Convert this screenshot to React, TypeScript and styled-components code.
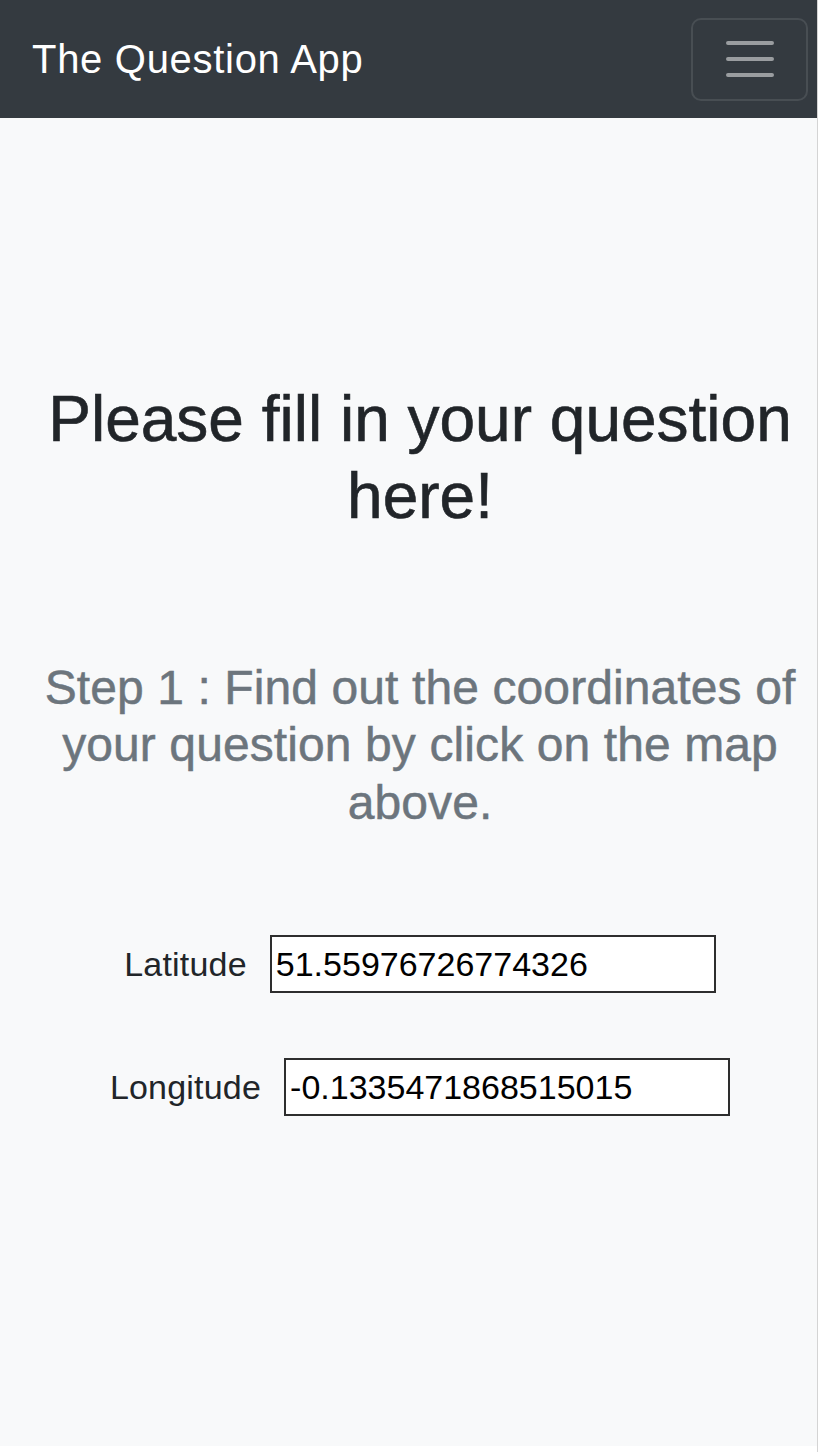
import React from "react";
import styled, { createGlobalStyle } from "styled-components";

const GlobalStyle = createGlobalStyle`
  html, body {
    margin: 0;
    padding: 0;
    background: #ffffff;
  }
  body {
    font-family: "Liberation Sans", Arial, Helvetica, sans-serif;
    color: #212529;
  }
  * { box-sizing: border-box; }
`;

const Page = styled.div`
  width: 818px;
  min-height: 1452px;
  border-right: 1px solid #d4d4d4;
  display: flex;
  flex-direction: column;
`;

const Navbar = styled.nav`
  height: 118px;
  background: #343a40;
  display: flex;
  align-items: center;
  justify-content: space-between;
  padding: 0 9px 0 32px;
`;

const Brand = styled.a`
  font-size: 40px;
  line-height: 46px;
  letter-spacing: 0.7px;
  color: #ffffff;
  text-decoration: none;
  white-space: nowrap;
`;

const Toggler = styled.button`
  width: 117px;
  height: 83px;
  display: flex;
  align-items: center;
  justify-content: center;
  background: transparent;
  border: 2px solid rgba(255, 255, 255, 0.1);
  border-radius: 10px;
  padding: 0;
  cursor: pointer;
`;

const Main = styled.main`
  height: 1328px;
  background: #f8f9fa;
  padding: 263px 7px 0 30px;
  display: flex;
  flex-direction: column;
  align-items: stretch;
  text-align: center;
`;

const Title = styled.h2`
  margin: 0;
  font-size: 64px;
  line-height: 76.8px;
  font-weight: 500;
  color: #212529;
  -webkit-text-stroke: 0.6px currentColor;
`;

const Step = styled.h4`
  margin: 124px 0 0;
  font-size: 48px;
  line-height: 57.6px;
  font-weight: 500;
  letter-spacing: 0.1px;
  color: #6c757d;
  -webkit-text-stroke: 0.5px currentColor;
`;

const Form = styled.form`
  margin-top: 104px;
  display: flex;
  flex-direction: column;
  gap: 65px;
`;

const Row = styled.div`
  display: flex;
  justify-content: center;
  align-items: center;
  gap: 23px;
  height: 58px;
`;

const Label = styled.label`
  font-size: 34px;
  line-height: 39px;
  letter-spacing: 0.2px;
  color: #212529;
`;

const Field = styled.input`
  width: 446px;
  height: 58px;
  padding: 0 4px;
  border: 2px solid #2e2e2e;
  border-radius: 0;
  background: #ffffff;
  color: #000000;
  font-family: "Liberation Sans", Arial, Helvetica, sans-serif;
  font-size: 34px;
  line-height: 39px;
  outline: none;
`;

const HamburgerIcon = () => (
  <svg width="60" height="60" viewBox="0 0 30 30" aria-hidden="true">
    <path
      d="M4 7h22M4 15h22M4 23h22"
      stroke="rgba(255,255,255,0.5)"
      strokeWidth="2"
      strokeLinecap="round"
      fill="none"
    />
  </svg>
);

export default function App() {
  return (
    <>
      <GlobalStyle />
      <Page>
        <Navbar>
          <Brand href="#">The Question App</Brand>
          <Toggler type="button" aria-label="Toggle navigation">
            <HamburgerIcon />
          </Toggler>
        </Navbar>
        <Main>
          <Title>Please fill in your question here!</Title>
          <Step>Step 1 : Find out the coordinates of your question by click on the map above.</Step>
          <Form onSubmit={(e) => e.preventDefault()}>
            <Row>
              <Label htmlFor="lat">Latitude</Label>
              <Field id="lat" type="text" defaultValue="51.55976726774326" />
            </Row>
            <Row>
              <Label htmlFor="lng">Longitude</Label>
              <Field id="lng" type="text" defaultValue="-0.1335471868515015" />
            </Row>
          </Form>
        </Main>
      </Page>
    </>
  );
}
